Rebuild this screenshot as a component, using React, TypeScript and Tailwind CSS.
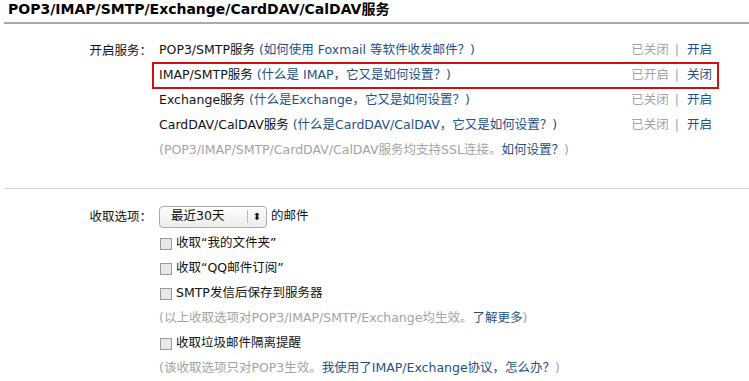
import React from 'react';

const services = [
  { name: 'POP3/SMTP服务', help: '如何使用 Foxmail 等软件收发邮件？', on: false },
  { name: 'IMAP/SMTP服务', help: '什么是 IMAP，它又是如何设置？', on: true },
  { name: 'Exchange服务', help: '什么是Exchange，它又是如何设置？', on: false },
  { name: 'CardDAV/CalDAV服务', help: '什么是CardDAV/CalDAV，它又是如何设置？', on: false },
];

const link = 'text-[#23508a]';
const muted = 'text-[#a3a3a3]';

function Check({ label }: { label: string }) {
  return (
    <div className="h-[25px] flex items-center">
      <span className="w-[12px] h-[12px] border border-[#9a9a9a] bg-[#e8e8e8] mr-[4px] ml-[1px]" />
      <span>{label}</span>
    </div>
  );
}

export default function App() {
  return (
    <div className="w-[749px] h-[381px] overflow-hidden bg-white text-[12.5px] text-[#111] font-['DejaVu_Sans','Noto_Sans_CJK_SC',sans-serif]">
      <div className="pl-1">
        <h2 className="pl-1 h-[24px] pt-[1px] text-[14px] leading-[16px] font-bold text-black border-b-2 border-[#a6aaae]">
          POP3/IMAP/SMTP/Exchange/CardDAV/CalDAV服务
        </h2>

        <div className="flex pt-[14px] pb-[25px] border-b border-[#d4d4d4]">
          <div className="w-[148px] text-right h-[25px] leading-[25px]">开启服务：</div>
          <div className="w-[567px]">
            {services.map((s) => (
              <div
                key={s.name}
                className={`flex items-center justify-between px-[5px] border-2 ${s.on ? 'h-[27px] -my-px border-[#cc1111]' : 'h-[25px] border-transparent'}`}
              >
                <span>
                  {s.name} <span className={link}>({s.help})</span>
                </span>
                <span className="flex items-center">
                  <span className={muted}>{s.on ? '已开启' : '已关闭'}</span>
                  <span className={`${muted} ml-[6px] mr-[8px]`}>|</span>
                  <span className={link}>{s.on ? '关闭' : '开启'}</span>
                </span>
              </div>
            ))}
            <div className={`h-[25px] flex items-center px-[7px] ${muted}`}>
              <span>
                (POP3/IMAP/SMTP/CardDAV/CalDAV服务均支持SSL连接。<span className={link}>如何设置？</span>)
              </span>
            </div>
          </div>
        </div>

        <div className="flex pt-[13px]">
          <div className="w-[148px] text-right h-[29px] leading-[29px]">收取选项：</div>
          <div className="pl-[7px]">
            <div className="h-[29px] flex items-center">
              <div className="w-[108px] h-[22px] flex items-center border border-[#a9a9a9] rounded-[4px] bg-gradient-to-b from-white to-[#ececec]">
                <span className="flex-1 pl-[11px]">最近30天</span>
                <span className="w-px h-[13px] bg-[#bbb]" />
                <span className="w-[18px] text-center text-[10px] leading-none">⬍</span>
              </div>
              <span className="ml-[4px]">的邮件</span>
            </div>
            <Check label="收取“我的文件夹”" />
            <Check label="收取“QQ邮件订阅”" />
            <Check label="SMTP发信后保存到服务器" />
            <div className={`h-[25px] flex items-center ${muted}`}>
              <span>
                (以上收取选项对POP3/IMAP/SMTP/Exchange均生效。<span className={link}>了解更多</span>)
              </span>
            </div>
            <Check label="收取垃圾邮件隔离提醒" />
            <div className={`h-[25px] flex items-center ${muted}`}>
              <span>
                (该收取选项只对POP3生效。<span className={link}>我使用了IMAP/Exchange协议，怎么办？</span>)
              </span>
            </div>
          </div>
        </div>
      </div>
    </div>
  );
}
